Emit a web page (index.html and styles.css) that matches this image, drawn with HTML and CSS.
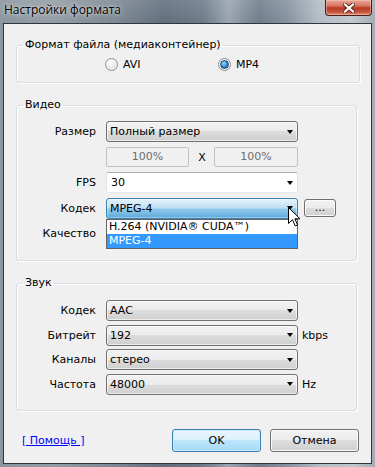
FILE: index.html
```html
<!DOCTYPE html>
<html lang="ru">
<head>
    <meta charset="UTF-8">
    <meta name="viewport" content="width=device-width, initial-scale=1.0">
    <title>Настройки формата</title>
    <link rel="stylesheet" href="styles.css">
</head>
<body>
    <div class="window">
        <!-- Заголовок окна -->
        <div class="titlebar">
            <span class="title">Настройки формата</span>
            <span class="close">
                <svg width="12" height="10" viewBox="0 0 12 10">
                    <path d="M2 1.5L10 8.5M10 1.5L2 8.5" stroke="#5a2418" stroke-width="4" stroke-linecap="square"/>
                    <path d="M2 1.5L10 8.5M10 1.5L2 8.5" stroke="#ffffff" stroke-width="2.2" stroke-linecap="square"/>
                </svg>
            </span>
        </div>

        <div class="client">
            <!-- Формат файла -->
            <fieldset class="group group-format">
                <legend>Формат файла (медиаконтейнер)</legend>
                <div class="radios">
                    <label class="radio"><span class="radio-dot"></span>AVI</label>
                    <label class="radio checked"><span class="radio-dot"></span>MP4</label>
                </div>
            </fieldset>

            <!-- Видео -->
            <fieldset class="group">
                <legend>Видео</legend>
                <div class="form form-video">
                    <span class="label">Размер</span>
                    <div class="combo">Полный размер</div>
                    <span></span>

                    <span></span>
                    <div class="size-row">
                        <div class="field">100%</div>
                        <span class="size-x">X</span>
                        <div class="field">100%</div>
                    </div>
                    <span></span>

                    <span class="label">FPS</span>
                    <div class="combo edit">30</div>
                    <span></span>

                    <span class="label">Кодек</span>
                    <div class="dropdown">
                        <div class="combo active">MPEG-4</div>
                        <div class="list">
                            <div class="list-item">H.264 (NVIDIA® CUDA™)</div>
                            <div class="list-item selected">MPEG-4</div>
                        </div>
                        <svg class="cursor" width="13" height="21" viewBox="0 0 13 21">
                            <path d="M0.5 0.5V16.5L4.5 12.7L7.2 19L9.6 18L6.9 11.8H12Z" fill="#ffffff" stroke="#000000" stroke-linejoin="round"/>
                        </svg>
                    </div>
                    <button class="btn btn-small">...</button>

                    <span class="label">Качество</span>
                    <div class="combo"></div>
                    <span></span>
                </div>
            </fieldset>

            <!-- Звук -->
            <fieldset class="group">
                <legend>Звук</legend>
                <div class="form form-audio">
                    <span class="label">Кодек</span>
                    <div class="combo">AAC</div>
                    <span></span>

                    <span class="label">Битрейт</span>
                    <div class="combo">192</div>
                    <span class="unit">kbps</span>

                    <span class="label">Каналы</span>
                    <div class="combo">стерео</div>
                    <span></span>

                    <span class="label">Частота</span>
                    <div class="combo">48000</div>
                    <span class="unit">Hz</span>
                </div>
            </fieldset>

            <div class="actions">
                <a class="help" href="#">[ Помощь ]</a>
                <button class="btn default">OK</button>
                <button class="btn">Отмена</button>
            </div>
        </div>
    </div>
</body>
</html>
```

FILE: styles.css
```css
* {
    box-sizing: border-box;
}

body {
    margin: 0;
    width: 375px;
    height: 467px;
    overflow: hidden;
    font-family: "DejaVu Sans", Tahoma, sans-serif;
    font-size: 11px;
    color: #000000;
}

.window {
    height: 467px;
    padding: 0 3px 3px;
    display: flex;
    flex-direction: column;
    background:
        linear-gradient(180deg, rgba(255, 255, 255, 0.12), rgba(255, 255, 255, 0) 24px),
        linear-gradient(90deg, #8b959e 0%, #939ca4 14%, #7d8893 30%, #606e7c 44%, #6c7a88 54%, #98a4ae 61%, #6e7c8a 69%, #8693a0 77%, #b3bcc4 85%, #c1c8ce 94%, #a1abb4 100%);
}

/* Заголовок */
.titlebar {
    height: 23px;
    display: flex;
    align-items: flex-start;
    justify-content: space-between;
}

.title {
    font-family: "Open Sans", sans-serif;
    font-size: 12px;
    line-height: 20px;
    padding-left: 1px;
    color: #000000;
    text-shadow: 0 0 5px rgba(255, 255, 255, 0.7), 0 0 2px rgba(255, 255, 255, 0.5);
}

.close {
    width: 47px;
    height: 16px;
    display: flex;
    align-items: center;
    justify-content: center;
    border: 1px solid #4a1f16;
    border-top: none;
    border-radius: 0 0 4px 4px;
    background: linear-gradient(#e7a797, #d77460 40%, #b93b24 52%, #c4503a 78%, #df907c);
    box-shadow: inset 0 0 0 1px rgba(255, 210, 200, 0.45);
}

.client {
    flex: 1;
    display: flex;
    flex-direction: column;
    background-color: #f0f0f0;
    border: 1px solid #30363c;
}

/* Группы */
.group {
    margin: 15px 14px 0 12px;
    padding: 0;
    min-width: 0;
    border: 1px solid #d5dfe5;
    border-radius: 3px;
    box-shadow: inset 1px 1px 0 #ffffff, 1px 1px 0 #ffffff;
}

.group-format {
    margin: 14px 11px 0 12px;
}

.group legend {
    margin-left: 6px;
    padding: 0 2px;
    line-height: 14px;
}

.radios {
    display: grid;
    grid-template-columns: 113px auto;
    padding: 4px 0 10px 88px;
}

.radio {
    display: flex;
    align-items: center;
    gap: 5px;
    height: 16px;
}

.radio-dot {
    width: 13px;
    height: 13px;
    display: flex;
    align-items: center;
    justify-content: center;
    border: 1px solid #8e8f8f;
    border-radius: 50%;
    background: radial-gradient(circle at 40% 35%, #ffffff, #e6e6e6 55%, #cdcdcd);
    box-shadow: inset 0 0 0 1px #f6f6f6;
}

.radio.checked .radio-dot::before {
    content: "";
    width: 7px;
    height: 7px;
    border-radius: 50%;
    border: 1px solid #1d4f7e;
    background: radial-gradient(circle at 40% 35%, #9bdcf8, #2f86cc 55%, #134679);
}

/* Формы */
.form {
    display: grid;
    grid-template-columns: 89px 192px 1fr;
    grid-auto-rows: 21px;
    align-items: center;
}

.form-video {
    row-gap: 4.5px;
    padding: 9px 0 16px;
}

.form-audio {
    row-gap: 3.5px;
    padding: 10px 0 15px;
}

.label {
    text-align: right;
    padding-right: 10px;
    white-space: nowrap;
}

.unit {
    padding-left: 4px;
}

.combo {
    height: 21px;
    display: flex;
    align-items: center;
    padding: 0 4px 0 3px;
    white-space: nowrap;
    border: 1px solid #707070;
    border-radius: 3px;
    background: linear-gradient(#f2f2f2, #ebebeb 50%, #dddddd 50%, #cfcfcf);
    box-shadow: inset 0 0 0 1px rgba(255, 255, 255, 0.6);
}

.combo::after {
    content: "";
    margin-left: auto;
    border-top: 4px solid #000000;
    border-left: 3px solid transparent;
    border-right: 3px solid transparent;
}

.combo.edit {
    padding-left: 4px;
    border-color: #abadb3 #dbdfe6 #e3e9ef #e2e3ea;
    border-radius: 2px;
    background: #ffffff;
    box-shadow: none;
}

.combo.active {
    border-color: #3c7fb1;
    background: linear-gradient(#e6f3fb, #bfe0f4 45%, #8fc8ea 55%, #5ea9da);
    box-shadow: inset 0 0 0 1px rgba(255, 255, 255, 0.35);
}

.size-row {
    display: flex;
    align-items: center;
    height: 20px;
}

.field {
    width: 83px;
    height: 20px;
    line-height: 18px;
    text-align: center;
    color: #6d6d6d;
    border: 1px solid #c2c2c2;
    border-radius: 2px;
    background-color: #f0f0f0;
}

.size-row .field:last-child {
    width: 84px;
}

.size-x {
    flex: 1;
    text-align: center;
    padding-left: 1px;
}

/* Раскрытый список */
.dropdown {
    position: relative;
}

.list {
    position: absolute;
    left: 0;
    top: 21px;
    width: 192px;
    z-index: 1;
    background-color: #ffffff;
    border: 1px solid #646464;
}

.list-item {
    height: 14px;
    line-height: 14px;
    padding-left: 2px;
    white-space: nowrap;
}

.list-item.selected {
    background-color: #3399ff;
    color: #ffffff;
}

.cursor {
    position: absolute;
    left: 182px;
    top: 9px;
    z-index: 2;
}

/* Кнопки */
.btn {
    width: 89px;
    height: 23px;
    padding: 0;
    font: inherit;
    color: #000000;
    border: 1px solid #707070;
    border-radius: 3px;
    background: linear-gradient(#f2f2f2, #ebebeb 50%, #dddddd 50%, #cfcfcf);
    box-shadow: inset 0 0 0 1px #fbfbfb;
}

.btn.default {
    border-color: #3c7fb1;
    background: linear-gradient(#eaf6fd, #d9f0fc 50%, #bee6fd 50%, #a7d9f5);
    box-shadow: inset 0 0 0 1px #cde9f8;
}

.btn-small {
    justify-self: start;
    width: 32px;
    height: 18px;
    margin-left: 6px;
    line-height: 10px;
}

.actions {
    display: flex;
    align-items: center;
    gap: 9px;
    margin: 18px 12px 0 18px;
}

.help {
    margin-right: auto;
    color: #0000ff;
    text-decoration: underline;
}
```
